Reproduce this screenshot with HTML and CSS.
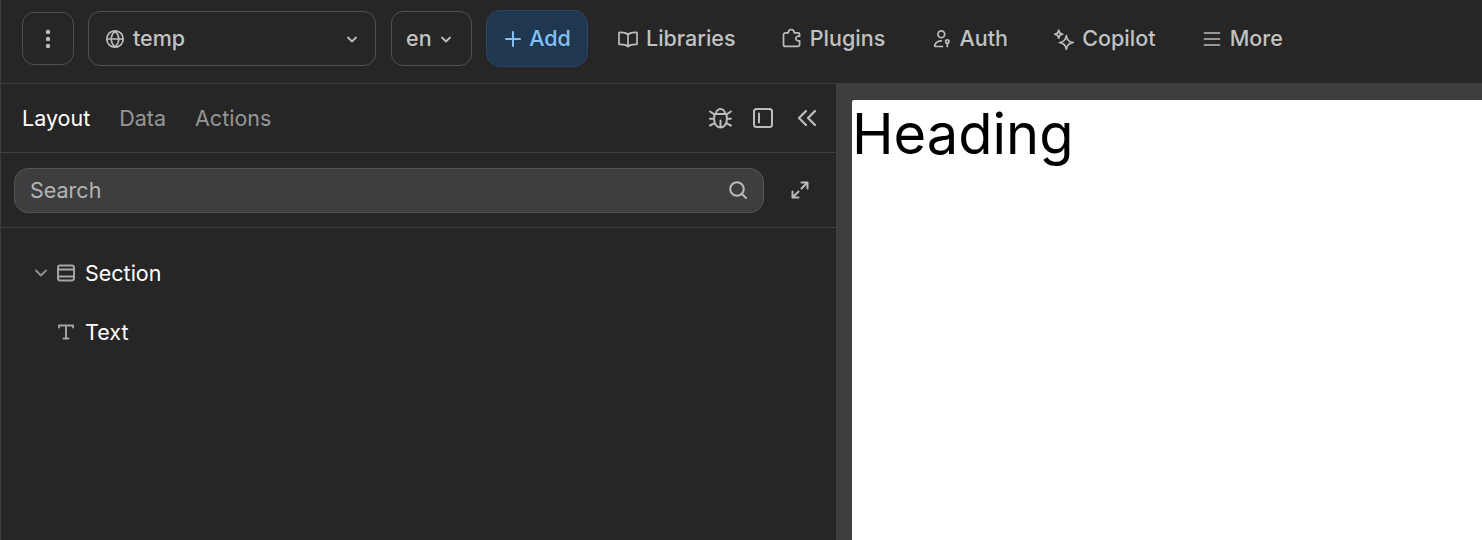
FILE: index.html
```html
<!DOCTYPE html>
<html lang="en">
<head>
<meta charset="utf-8">
<title>Editor</title>
<link rel="stylesheet" href="styles.css">
</head>
<body>
<header class="topbar">
  <button class="box menu-btn"><svg width="6" height="22" viewBox="0 0 6 22"><circle cx="3" cy="4" r="2.200"/><circle cx="3" cy="11" r="2.200"/><circle cx="3" cy="18" r="2.200"/></svg></button>
  <button class="box site-btn">
    <svg class="ico" width="20" height="20" viewBox="0 0 20 20"><circle cx="10" cy="10" r="8.200"/><path d="M2 10h16M10 2c-5 5-5 11 0 16M10 2c5 5 5 11 0 16"/></svg>
    <span class="grow lbl">temp</span>
    <svg class="chev" width="12" height="12" viewBox="0 0 12 12"><path d="M2 4.500 6 8.500l4-4"/></svg>
  </button>
  <button class="box lang-btn"><span class="lbl">en</span><svg class="chev" width="12" height="12" viewBox="0 0 12 12"><path d="M2 4.500 6 8.500l4-4"/></svg></button>
  <button class="add-btn"><svg width="20" height="20" viewBox="0 0 20 20"><path d="M10 3v14M3 10h14"/></svg><span class="lbl">Add</span></button>
  <nav class="nav">
    <a class="nav-item"><svg class="ico" width="22" height="22" viewBox="0 0 22 22"><path d="M11 6.500C9 4.800 5.500 4.300 2 4.500v12c3.500-.2 7 .2 9 2 2-1.800 5.500-2.200 9-2v-12c-3.500-.2-7 .3-9 2zM11 6.500v12"/></svg><span class="lbl">Libraries</span></a>
    <a class="nav-item"><svg class="ico" width="22" height="22" viewBox="0 0 22 22"><path d="M4.500 4.800H7.200C7.400 2.700 8.700 1.500 10.200 1.500S13.100 2.700 13.300 4.800H17a1.600 1.600 0 0 1 1.600 1.600V8.200C16.400 7.800 14.800 9 14.800 10.500S16.400 13.200 18.600 12.800V16.800a1.600 1.600 0 0 1-1.600 1.600H4.500a2 2 0 0 1-2-2V6.800a2 2 0 0 1 2-2z"/></svg><span class="lbl">Plugins</span></a>
    <a class="nav-item"><svg class="ico" width="22" height="22" viewBox="0 0 22 22"><circle cx="10.300" cy="6.200" r="3.400"/><path d="M11.500 18.500H4.300C3.500 18.500 3.500 17.500 3.800 16.800 4.800 14.500 7.200 12.800 10.300 12.800"/><circle cx="16.300" cy="13.500" r="1.700"/><path d="M16.300 15.200v3.300"/></svg><span class="lbl">Auth</span></a>
    <a class="nav-item"><svg class="ico" width="22" height="22" viewBox="0 0 22 22"><path d="M13.300 7.500C13.800 12 15.800 14 20.300 14.500 15.800 15 13.800 17 13.300 21.500 12.800 17 10.800 15 6.300 14.500 10.800 14 12.800 12 13.300 7.500zM5.700 2.200 6.800 5.100 9.700 6.200 6.800 7.300 5.700 10.200 4.600 7.300 1.700 6.200 4.600 5.100z"/></svg><span class="lbl">Copilot</span></a>
    <a class="nav-item"><svg class="ico" width="22" height="22" viewBox="0 0 22 22"><path d="M3.500 5h15M3.500 11h15M3.500 17h15"/></svg><span class="lbl">More</span></a>
  </nav>
</header>
<main class="workspace">
  <aside class="panel">
    <div class="tabs">
      <span class="tab active">Layout</span>
      <span class="tab">Data</span>
      <span class="tab">Actions</span>
      <div class="tab-icons">
        <svg class="ico bold" width="24" height="24" viewBox="0 0 24 24"><path d="M7 8h11c.8 1.200.9 3 .9 5 0 5-2.800 8.500-6.400 8.500S6.100 18 6.100 13c0-2 .1-3.800.9-5zM8 8c0-3 2-5 4.500-5S17 5 17 8M12.500 14.500v7M6 8.200 2 5.500M18.900 8.200l4-2.700M6 12.800H2M18.900 12.800h4M6.700 17.200 2 19.500M18.200 17.200l4.700 2.300"/></svg>
        <svg class="ico bold" width="22" height="22" viewBox="0 0 22 22"><rect x="2" y="2" width="18" height="18" rx="2.500"/><path d="M7 6.500v9"/></svg>
        <svg class="ico thick" width="22" height="22" viewBox="0 0 22 22"><path d="M10 4 3 11l7 7M19 4l-7 7 7 7"/></svg>
      </div>
    </div>
    <div class="search-row">
      <div class="search"><span class="grow">Search</span><svg class="ico bold" width="20" height="20" viewBox="0 0 20 20"><circle cx="9" cy="9" r="6.800"/><path d="m14 14 4 4"/></svg></div>
      <svg class="ico bold expand" width="20" height="20" viewBox="0 0 20 20"><path d="M11.500 2.500h6v6M17.500 2.500l-6 6M8.500 17.500h-6v-6M2.500 17.500l6-6"/></svg>
    </div>
    <ul class="tree">
      <li class="node"><svg class="tree-chev" width="14" height="14" viewBox="0 0 14 14"><path d="M2 4.500 7 9.500 12 4.500"/></svg><svg class="tree-ico" width="20" height="20" viewBox="0 0 20 20"><rect x="2" y="2.500" width="16" height="15" rx="2.200"/><path d="M2 6.500h16M2 13.500h16"/></svg>Section</li>
      <li class="node"><span class="tree-space"></span><svg class="tree-ico" width="20" height="20" viewBox="0 0 20 20"><path d="M3 5.500V3.500h14v2M10 3.500v13M7.500 16.500h5"/></svg>Text</li>
    </ul>
  </aside>
  <section class="canvas">
    <div class="page"><h1>Heading</h1></div>
  </section>
</main>
</body>
</html>
```
FILE: styles.css
```css
* { box-sizing: border-box; }
html, body { margin: 0; height: 100%; overflow: hidden; }
body {
  background: #262626;
  color: #c2c2c2;
  font-family: Inter, "Liberation Sans", sans-serif;
  font-size: 21.5px;
  display: flex;
  flex-direction: column;
  border-left: 1px solid #3d3d3d;
}
button { font: inherit; color: inherit; background: none; padding: 0; }
svg { fill: none; stroke: currentColor; stroke-width: 1.7; stroke-linecap: round; stroke-linejoin: round; flex: none; }
.ico { color: #bcbcbc; }
.bold { stroke-width: 2; }
.thick { stroke-width: 2.3; margin-left: 2px; }
.grow { flex: 1; text-align: left; }
.lbl { padding-bottom: 2px; }

.topbar {
  height: 84px;
  flex: none;
  display: flex;
  align-items: center;
  padding: 0 0 6px 21px;
  border-bottom: 1px solid #414141;
  font-weight: 500;
  line-height: 24px;
}
.box {
  height: 55px;
  border: 1px solid #525252;
  border-radius: 12px;
  display: flex;
  align-items: center;
}
.menu-btn { width: 52px; height: 53px; justify-content: center; margin-right: 14px; }
.menu-btn svg { fill: #bcbcbc; stroke: none; }
.site-btn { width: 288px; padding: 0 17px 0 16px; gap: 8px; margin-right: 15px; }
.lang-btn { width: 81px; padding: 0 14px; gap: 8px; margin-right: 14px; }
.chev { stroke-width: 1.8; color: #bcbcbc; }
.add-btn {
  height: 57px;
  width: 102px;
  border: 1px solid #2b4563;
  border-radius: 14px;
  background: #203750;
  color: #82c0f5;
  display: flex;
  align-items: center;
  justify-content: center;
  gap: 6px;
  margin-right: 29px;
}
.add-btn svg { stroke-width: 2; }
.nav { display: flex; align-items: center; gap: 45.3px; }
.nav-item { display: flex; align-items: center; gap: 7px; white-space: nowrap; }

.workspace { flex: 1; display: flex; min-height: 0; }
.panel {
  width: 836px;
  flex: none;
  border-right: 1px solid #414141;
  display: flex;
  flex-direction: column;
}
.tabs {
  height: 69px;
  border-bottom: 1px solid #414141;
  display: flex;
  align-items: center;
  padding: 0 18px 0 21px;
  gap: 29px;
}
.tab { color: #969696; }
.tab.active { color: #fff; }
.tab-icons { margin-left: auto; display: flex; align-items: center; gap: 20px; }
.search-row {
  height: 75px;
  border-bottom: 1px solid #414141;
  display: flex;
  align-items: center;
  padding-left: 13px;
}
.search {
  width: 750px;
  height: 45px;
  background: #3e3e3e;
  border: 1px solid #545454;
  border-radius: 14px;
  display: flex;
  align-items: center;
  padding: 0 15px;
  color: #b4b4b4;
}
.expand { margin-left: 26px; }
.tree { list-style: none; margin: 0; padding: 15px 0 0 33px; color: #fff; }
.node { height: 59px; display: flex; align-items: center; gap: 9px; }
.tree-ico { color: #a6a6a6; stroke-width: 1.9; }
.tree-chev { color: #8e8e8e; stroke-width: 1.9; margin-right: -1px; }
.tree-space { width: 14px; margin-right: -1px; }

.canvas { flex: 1; background: #3e3e3e; padding: 16px 0 0 15px; min-width: 0; }
.page { background: #fff; height: 100%; border-top-left-radius: 2px; }
h1 {
  margin: 0;
  color: #000;
  font: 400 56px/68px Inter, "Liberation Sans", sans-serif;
}
```
